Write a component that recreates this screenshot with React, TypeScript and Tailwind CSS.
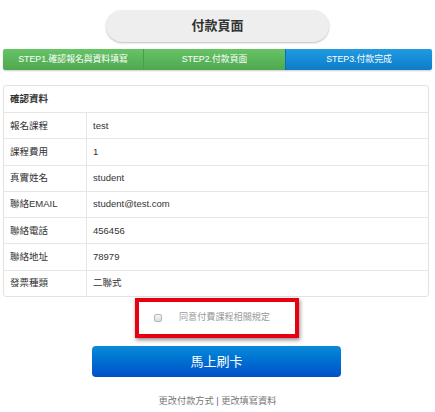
import React from 'react';

const font = { fontFamily: '"Liberation Sans", "Noto Sans CJK TC", sans-serif' };

const rows: [string, string][] = [
  ['報名課程', 'test'],
  ['課程費用', '1'],
  ['真實姓名', 'student'],
  ['聯絡EMAIL', 'student@test.com'],
  ['聯絡電話', '456456'],
  ['聯絡地址', '78979'],
  ['發票種類', '二聯式'],
];

const App: React.FC = () => {
  return (
    <div className="w-[435px] h-[412px] bg-white overflow-hidden" style={font}>
      {/* Page title */}
      <div className="flex justify-center pt-[10px]">
        <div className="flex h-[32px] w-[223px] items-center justify-center rounded-full bg-[#eeeeee] text-[13px] font-bold text-[#333] shadow-[0_1px_2px_rgba(0,0,0,0.25)]">
          付款頁面
        </div>
      </div>

      {/* Steps */}
      <div className="mx-[3px] mt-[7px] flex h-[21px] overflow-hidden rounded-[2px] text-[8.8px] text-white shadow-[0_1px_2px_rgba(0,0,0,0.2)]">
        <div className="flex w-[141px] items-center justify-center border-r border-[#46a046] bg-gradient-to-b from-[#66c466] to-[#4fa84f]">
          STEP1.確認報名與資料填寫
        </div>
        <div className="flex w-[141px] items-center justify-center bg-gradient-to-b from-[#66c466] to-[#4fa84f]">
          STEP2.付款頁面
        </div>
        <div className="flex flex-1 items-center justify-center border-l border-[#0b6fb3] bg-gradient-to-b from-[#219be2] to-[#0c7cc9]">
          STEP3.付款完成
        </div>
      </div>

      {/* Confirmation table */}
      <div className="ml-[3px] mr-[6px] mt-[15px] rounded-[3px] border border-[#e2e2e2] text-[9.5px] text-[#333]">
        <div className="flex h-[26px] items-center px-[6px] font-bold">確認資料</div>
        {rows.map(([label, value]) => (
          <div key={label} className="flex h-[26.3px] border-t border-[#e6e6e6]">
            <div className="flex w-[83px] items-center border-r border-[#e6e6e6] px-[6px]">{label}</div>
            <div className="flex flex-1 items-center px-[6px]">{value}</div>
          </div>
        ))}
      </div>

      {/* Agreement */}
      <div className="flex justify-center">
        <div className="ml-[-1px] mt-[1px] flex h-[40px] w-[164px] items-center border-[4px] border-[#e60012] pl-[15px] shadow-[1px_2px_4px_rgba(0,0,0,0.45)]">
          <span className="h-[8px] w-[8px] rounded-[2px] border border-[#b5b5b5] bg-gradient-to-b from-[#f7f7f7] to-[#dcdcdc]" />
          <span className="ml-[17px] text-[9.1px] text-[#9a9a9a]">同意付費課程相關規定</span>
        </div>
      </div>

      {/* Pay button */}
      <div className="mt-[8px] flex justify-center">
        <button className="ml-[-2px] h-[31px] w-[249px] rounded-[4px] bg-gradient-to-b from-[#0d8ad9] to-[#0050c8] text-[13px] text-white">
          馬上刷卡
        </button>
      </div>

      {/* Footer links */}
      <div className="mt-[18px] text-center text-[9.2px] text-[#777]">
        更改付款方式 <span className="text-[#7b4fa6]">|</span> 更改填寫資料
      </div>
    </div>
  );
};

export default App;
